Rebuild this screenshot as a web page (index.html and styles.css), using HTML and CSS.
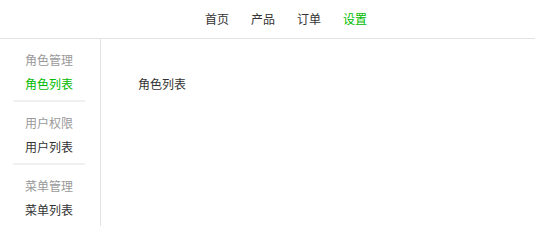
FILE: index.html
```html
<!DOCTYPE html>
<html lang="zh">
<head>
<meta charset="utf-8">
<link rel="stylesheet" href="styles.css">
</head>
<body>
<header class="topbar">
  <nav class="nav">
    <a class="nav-item">首页</a>
    <a class="nav-item">产品</a>
    <a class="nav-item">订单</a>
    <a class="nav-item active">设置</a>
  </nav>
</header>
<div class="main">
  <aside class="sidebar">
    <div class="group">
      <div class="group-title">角色管理</div>
      <div class="group-item active">角色列表</div>
    </div>
    <div class="group">
      <div class="group-title">用户权限</div>
      <div class="group-item">用户列表</div>
    </div>
    <div class="group">
      <div class="group-title">菜单管理</div>
      <div class="group-item">菜单列表</div>
    </div>
  </aside>
  <section class="content">
    <div class="content-text">角色列表</div>
  </section>
</div>
</body>
</html>
```
FILE: styles.css
```css
html, body {
  margin: 0;
  padding: 0;
  background: #fff;
  font-family: "Noto Sans CJK SC", "Noto Sans", sans-serif;
  font-size: 12px;
  color: #333;
}
.topbar {
  height: 38px;
  border-bottom: 1px solid #e2e2e2;
  display: flex;
  align-items: center;
}
.nav {
  display: flex;
  padding-left: 194px;
}
.nav-item {
  padding: 0 11px;
  line-height: 24px;
  color: #333;
}
.nav-item.active {
  color: #00bb00;
}
.main {
  display: flex;
  height: 187px;
}
.sidebar {
  width: 101px;
  border-right: 1px solid #e2e2e2;
  box-sizing: border-box;
  flex: none;
}
.group {
  margin: 0 15px 0 13px;
  padding: 9px 0 4px;
  border-bottom: 2px solid #f0f0f0;
  text-align: center;
}
.group-title {
  line-height: 24px;
  color: #999;
}
.group-item {
  line-height: 24px;
  color: #333;
}
.group-item.active {
  color: #00bb00;
}
.content {
  flex: 1;
  padding: 33px 0 0 37px;
}
.content-text {
  line-height: 24px;
}
```
